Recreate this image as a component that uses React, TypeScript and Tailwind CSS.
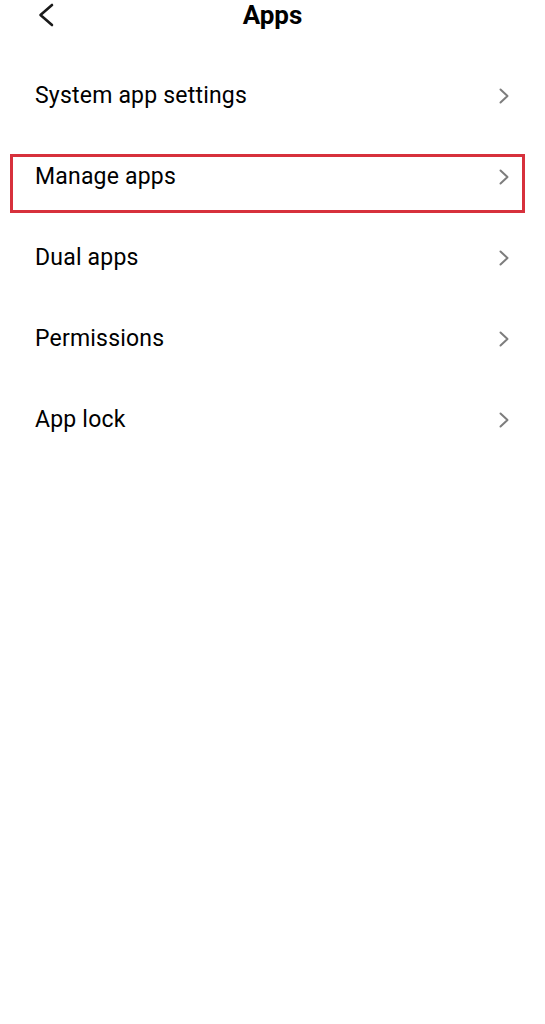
import React from "react";

const items = ["System app settings", "Manage apps", "Dual apps", "Permissions", "App lock"];

function Chevron() {
  return (
    <svg width="12" height="16" viewBox="0 0 12 16" fill="none" className="shrink-0">
      <polyline points="2.5,1.5 9.5,8 2.5,14.5" stroke="#7d7d7d" strokeWidth="2" strokeLinecap="round" strokeLinejoin="round" />
    </svg>
  );
}

export default function App() {
  return (
    <div className="relative w-[545px] h-[1024px] bg-white text-black" style={{ fontFamily: "Roboto, 'Noto Sans', sans-serif" }}>
      <div className="relative h-[30px] flex items-center justify-center">
        <svg width="18" height="24" viewBox="0 0 18 24" fill="none" className="absolute left-[37px] top-[3px]">
          <polyline points="15,2 3.5,12 15,22" stroke="#1a1a1a" strokeWidth="2.6" strokeLinecap="round" strokeLinejoin="round" />
        </svg>
        <span className="text-[26px] font-bold leading-none">Apps</span>
      </div>
      <div className="pt-[25px]">
        {items.map((t) => (
          <div key={t} className="h-[81px] flex items-center justify-between pl-[35px] pr-[35px]">
            <span className="text-[23px] leading-none tracking-[0.2px]">{t}</span>
            <Chevron />
          </div>
        ))}
      </div>
      <div className="absolute left-[10px] top-[154px] w-[515px] h-[59px] border-[3px] border-[#d7313c]" />
    </div>
  );
}
